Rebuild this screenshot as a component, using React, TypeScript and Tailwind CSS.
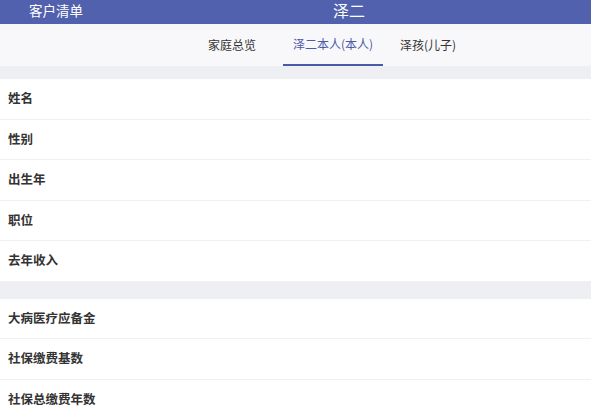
import React from 'react';

const groupOne = ['姓名', '性别', '出生年', '职位', '去年收入'];
const groupTwo = ['大病医疗应备金', '社保缴费基数', '社保总缴费年数'];

function Row({ label }: { label: string }) {
  return (
    <div className="h-[40.5px] flex items-center pl-[8px] bg-white border-b border-[#f1f1f3] text-[12.5px] font-semibold text-[#333]">
      {label}
    </div>
  );
}

export default function App() {
  return (
    <div className="w-[591px] h-[418px] overflow-hidden bg-white" style={{ fontFamily: '"Noto Sans CJK SC", "Noto Sans", sans-serif' }}>
      {/* Header */}
      <div className="h-[24px] bg-[#5161ae] flex items-center text-white">
        <div className="pl-[29px] w-[333px] text-[13.5px] leading-[20px] -mt-[4px]">客户清单</div>
        <div className="text-[16px] leading-[20px] -mt-[4px]">泽二</div>
      </div>

      {/* Tabs */}
      <div className="h-[42px] bg-[#f8f8fa] flex pl-[208px] text-[12px]">
        <div className="flex items-center text-[#333]">家庭总览</div>
        <div className="ml-[27px] w-[100px] flex items-center justify-center text-[#4b5aa8] border-b-2 border-[#4b5aa8]">泽二本人(本人)</div>
        <div className="ml-[17px] flex items-center text-[#333]">泽孩(儿子)</div>
      </div>

      <div className="h-[13px] bg-[#eeeff3]" />
      {groupOne.map((l) => (
        <Row key={l} label={l} />
      ))}
      <div className="h-[17px] bg-[#eeeff3]" />
      {groupTwo.map((l) => (
        <Row key={l} label={l} />
      ))}
    </div>
  );
}
